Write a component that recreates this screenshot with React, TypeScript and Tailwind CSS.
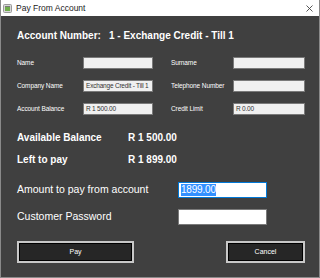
export default function App() {
  const small = "text-[6.5px] tracking-[-0.1px] text-white";
  const field = "h-[12px] border border-[#7a7a7a] bg-[#f0f0f0] pl-[2px] text-[6.5px] tracking-[-0.2px] text-[#333] leading-[10px] overflow-hidden whitespace-nowrap";

  return (
    <div className="w-[320px] h-[278px] flex flex-col" style={{ fontFamily: '"Liberation Sans", Arial, sans-serif' }}>
      {/* title bar */}
      <div className="h-[16px] bg-white flex items-center border-x border-[#8a8a8a]">
        <svg width="9" height="9" viewBox="0 0 9 9" className="ml-[2px]">
          <rect x="0.5" y="0.5" width="8" height="8" rx="1" fill="#d8d8d8" stroke="#9a9a9a" />
          <rect x="2" y="3" width="5" height="4" fill="#6fae4a" />
          <rect x="2" y="2" width="5" height="1" fill="#7a7a7a" />
        </svg>
        <span className="ml-[4px] text-[8.5px] text-[#222]">Pay From Account</span>
        <svg width="7" height="7" viewBox="0 0 7 7" className="ml-auto mr-[6px]">
          <path d="M0.5 0.5 L6.5 6.5 M6.5 0.5 L0.5 6.5" stroke="#444" strokeWidth="0.9" />
        </svg>
      </div>

      {/* body */}
      <div className="flex-1 bg-[#404040] border-x border-b border-[#8a8a8a] pl-[16px] pr-[14px] flex flex-col">
        <div className="mt-[14px] flex h-[12px] items-center text-[10px] font-bold text-white leading-[12px]">
          <span className="w-[92px]">Account Number:</span>
          <span>1 - Exchange Credit - Till 1</span>
        </div>

        <div className="mt-[15px] grid grid-cols-[66px_70px_18px_62px_72px] gap-y-[11px] items-center">
          <span className={small}>Name</span>
          <div className={field}></div>
          <span></span>
          <span className={small}>Surname</span>
          <div className={field}></div>

          <span className={small}>Company Name</span>
          <div className={field}>Exchange Credit - Till 1</div>
          <span></span>
          <span className={small}>Telephone Number</span>
          <div className={field}></div>

          <span className={small}>Account Balance</span>
          <div className={field}>R 1 500.00</div>
          <span></span>
          <span className={small}>Credit Limit</span>
          <div className={field}>R 0.00</div>
        </div>

        <div className="mt-[17px] flex h-[12px] items-center text-[10px] font-bold text-white leading-[12px]">
          <span className="w-[111px]">Available Balance</span>
          <span>R 1 500.00</span>
        </div>
        <div className="mt-[10px] flex h-[12px] items-center text-[10px] font-bold text-white leading-[12px]">
          <span className="w-[111px]">Left to pay</span>
          <span>R 1 899.00</span>
        </div>

        <div className="mt-[16px] flex items-center">
          <span className="w-[161px] text-[10.5px] text-white">Amount to pay from account</span>
          <div className="w-[89px] h-[16px] border border-[#0078d7] bg-white flex items-center pl-[2px]">
            <span className="bg-[#3390ff] text-white text-[10px] leading-[12px] tracking-[-0.2px]">1899.00</span>
          </div>
        </div>
        <div className="mt-[11px] flex items-center">
          <span className="w-[161px] text-[10.5px] text-white">Customer Password</span>
          <div className="w-[89px] h-[16px] border border-[#7a7a7a] bg-white"></div>
        </div>

        <div className="mt-[16px] flex justify-between">
          <button className="w-[117px] h-[22px] border-2 border-[#c8c8c8] bg-[#262626] outline outline-1 outline-black -outline-offset-3 text-[7px] text-white">
            Pay
          </button>
          <button className="w-[79px] h-[22px] border-2 border-[#c8c8c8] bg-[#262626] outline outline-1 outline-black -outline-offset-3 text-[7px] text-white">
            Cancel
          </button>
        </div>
      </div>
    </div>
  );
}
